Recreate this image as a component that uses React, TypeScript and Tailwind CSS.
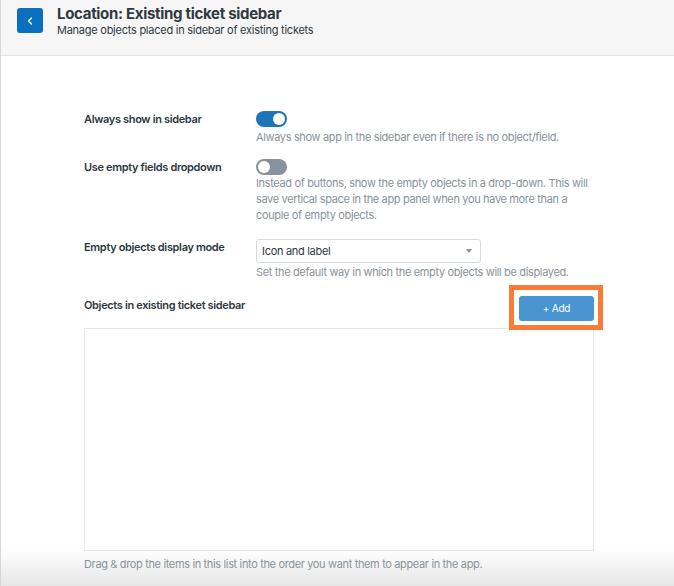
import { ChevronLeft } from "lucide-react";

function Toggle({ on }: { on: boolean }) {
  return (
    <div
      className={`flex h-[16px] w-[31px] items-center rounded-full px-[2px] ${
        on ? "justify-end bg-[#1f73b7]" : "justify-start bg-[#87929d]"
      }`}
    >
      <div className="h-[12px] w-[12px] rounded-full bg-white" />
    </div>
  );
}

function Row({ label, children }: { label: string; children: React.ReactNode }) {
  return (
    <div className="grid grid-cols-[172px_1fr]">
      <div className="text-[11px] font-semibold leading-[16px] tracking-[-0.35px] text-[#2f3941]">{label}</div>
      <div>{children}</div>
    </div>
  );
}

function Hint({ children, className = "" }: { children: React.ReactNode; className?: string }) {
  return (
    <p className={`text-[11px] leading-[16px] tracking-[-0.35px] text-[#8a9299] ${className}`}>{children}</p>
  );
}

export default function App() {
  return (
    <div
      className="flex h-[586px] w-[674px] flex-col overflow-hidden border-l border-[#d6d6d6] bg-white"
      style={{ fontFamily: "Inter, 'Liberation Sans', sans-serif" }}
    >
      <div className="flex h-[56px] shrink-0 items-start gap-[14px] border-b border-[#e4e4e4] bg-[#f6f6f6] pl-[16px] pt-[8px]">
        <button className="flex h-[25px] w-[26px] items-center justify-center rounded-[3px] bg-[#0b6fbf] text-white">
          <ChevronLeft size={12} strokeWidth={2.5} />
        </button>
        <div className="-mt-[3px] text-[#2f3941]">
          <h1 className="text-[15px] font-bold leading-[18px] tracking-[-0.3px]">Location: Existing ticket sidebar</h1>
          <p className="text-[11px] leading-[14px] tracking-[-0.25px]">
            Manage objects placed in sidebar of existing tickets
          </p>
        </div>
      </div>

      <div className="flex-1 bg-[linear-gradient(to_bottom,#ffffff_0%,#ffffff_93%,#e6e6e6_100%)] pl-[83px] pr-[80px] pt-[55px]">
        <Row label="Always show in sidebar">
          <Toggle on />
          <Hint className="mt-[2px]">Always show app in the sidebar even if there is no object/field.</Hint>
        </Row>

        <div className="mt-[14px]">
          <Row label="Use empty fields dropdown">
            <Toggle on={false} />
            <Hint className="max-w-[340px]">
              Instead of buttons, show the empty objects in a drop-down. This will save vertical space in the app
              panel when you have more than a couple of empty objects.
            </Hint>
          </Row>
        </div>

        <div className="mt-[16px]">
          <Row label="Empty objects display mode">
            <div className="flex h-[24px] w-[225px] items-center justify-between rounded-[3px] border border-[#d8dcde] bg-white pl-[5px] pr-[8px] text-[11px] tracking-[-0.3px] text-[#2f3941]">
              <span>Icon and label</span>
              <span className="h-0 w-0 border-x-[3px] border-t-[4px] border-x-transparent border-t-[#87929d]" />
            </div>
            <Hint className="mt-[1px]">Set the default way in which the empty objects will be displayed.</Hint>
          </Row>
        </div>

        <div className="mt-[14px] flex items-start justify-between">
          <div className="pt-[3px] text-[11px] font-semibold leading-[16px] tracking-[-0.35px] text-[#2f3941]">
            Objects in existing ticket sidebar
          </div>
          <div className="relative">
            <button className="h-[25px] w-[75px] rounded-[3px] bg-[#4994d1] text-[10px] tracking-[-0.2px] text-white">
              + Add
            </button>
            <div className="pointer-events-none absolute -bottom-[9px] -left-[10px] -right-[9px] -top-[9px] border-[5px] border-[#fc7a37]" />
          </div>
        </div>

        <div className="mt-[7px] h-[223px] border border-[#e3e5e7] bg-white" />
        <Hint className="mt-[5px]">
          Drag &amp; drop the items in this list into the order you want them to appear in the app.
        </Hint>
      </div>
    </div>
  );
}
